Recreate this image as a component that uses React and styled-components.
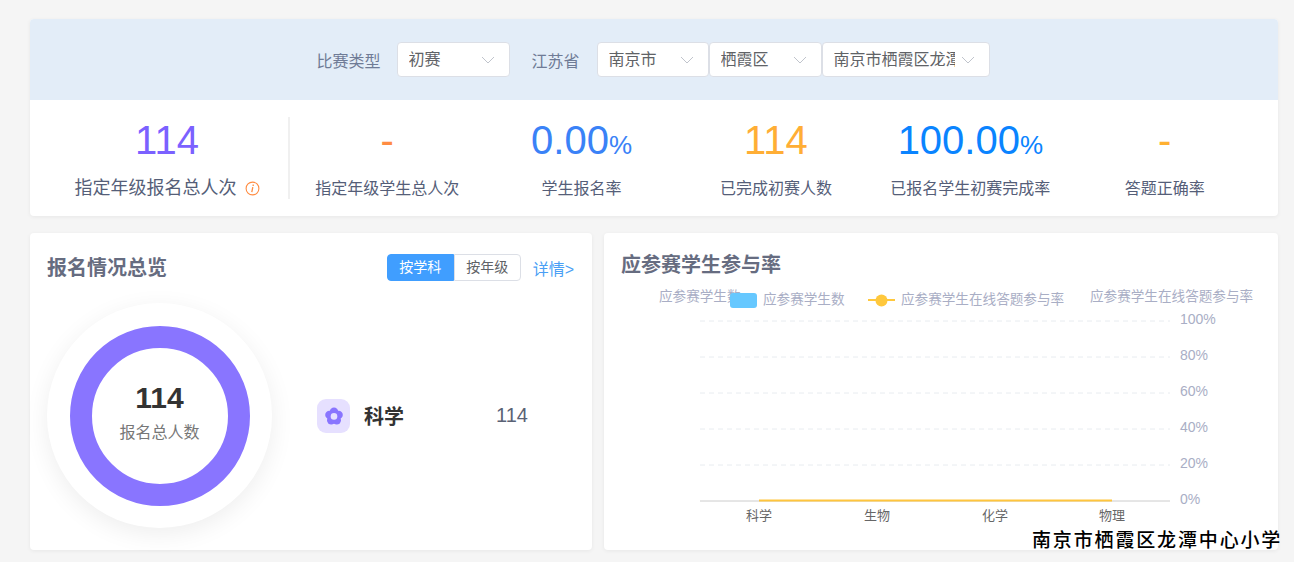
import styled, { createGlobalStyle } from 'styled-components';

const stats = [
  { value: '-', color: '#ff8c42', label: '指定年级学生总人次' },
  { value: '0.00', unit: '%', color: '#3a82f7', label: '学生报名率' },
  { value: '114', color: '#ffae35', label: '已完成初赛人数' },
  { value: '100.00', unit: '%', color: '#0a84ff', label: '已报名学生初赛完成率' },
  { value: '-', color: '#ffb031', label: '答题正确率' },
];

const ticks = [
  { y: 321, label: '100%' },
  { y: 357, label: '80%' },
  { y: 393, label: '60%' },
  { y: 429, label: '40%' },
  { y: 465, label: '20%' },
];

const subjects = [
  { x: 759, label: '科学' },
  { x: 877, label: '生物' },
  { x: 995, label: '化学' },
  { x: 1112, label: '物理' },
];

function Chevron() {
  return (
    <Arrow viewBox="0 0 14 8">
      <polyline points="1,1 7,7 13,1" fill="none" stroke="#c0c4cc" strokeWidth="1" />
    </Arrow>
  );
}

function Flower() {
  return (
    <svg width="20" height="20" viewBox="0 0 20 20">
      <g fill="#8975ff">
        <circle cx="10" cy="5.6" r="4.2" />
        <circle cx="14.6" cy="8.9" r="4.2" />
        <circle cx="12.8" cy="14.3" r="4.2" />
        <circle cx="7.2" cy="14.3" r="4.2" />
        <circle cx="5.4" cy="8.9" r="4.2" />
      </g>
      <circle cx="10" cy="10.4" r="3.3" fill="#e6e0ff" />
    </svg>
  );
}

function InfoMark() {
  return (
    <InfoIcon viewBox="0 0 15 15">
      <circle cx="7.5" cy="7.5" r="6.4" fill="none" stroke="#ff8c42" strokeWidth="1.1" />
      <path d="M8.2 3.6v1.3M7.8 6.2l-1 5" fill="none" stroke="#ff8c42" strokeWidth="1.3" />
    </InfoIcon>
  );
}

function RateChart() {
  return (
    <ChartSvg viewBox="621 283 657 267">
      <g fontSize="13.6" fill="#a9aec5">
        <text x="659" y="301">应参赛学生数</text>
        <text x="763" y="304">应参赛学生数</text>
        <text x="901" y="304">应参赛学生在线答题参与率</text>
        <text x="1090" y="301">应参赛学生在线答题参与率</text>
      </g>
      <rect x="730" y="293" width="27" height="15" rx="3" fill="#66c8ff" />
      <line x1="868" x2="895" y1="300" y2="300" stroke="#ffc83d" strokeWidth="2" />
      <circle cx="881.5" cy="300.5" r="6" fill="#ffc83d" />
      {ticks.map((t) => (
        <g key={t.y}>
          <line x1="700" x2="1170" y1={t.y} y2={t.y} stroke="#e8ecf0" strokeDasharray="5 4" />
          <text x="1180" y={t.y + 3} fontSize="14" fill="#a9aec5">{t.label}</text>
        </g>
      ))}
      <line x1="700" x2="1170" y1="501" y2="501" stroke="#cccccc" />
      <text x="1180" y="504" fontSize="14" fill="#a9aec5">0%</text>
      <line x1="759" x2="1112" y1="500.5" y2="500.5" stroke="#ffc53d" strokeWidth="2" />
      {subjects.map((s) => (
        <text key={s.x} x={s.x} y="520" fontSize="13" fill="#666666" textAnchor="middle">{s.label}</text>
      ))}
    </ChartSvg>
  );
}

export default function App() {
  return (
    <Page>
      <GlobalStyle />
      <Overview>
        <Filters>
          <FilterLabel>比赛类型</FilterLabel>
          <Select $width={113}>
            <SelectText>初赛</SelectText>
            <Chevron />
          </Select>
          <FilterLabel $left={22} $right={17}>江苏省</FilterLabel>
          <Select $width={112}>
            <SelectText>南京市</SelectText>
            <Chevron />
          </Select>
          <Select $width={113}>
            <SelectText>栖霞区</SelectText>
            <Chevron />
          </Select>
          <Select $width={168}>
            <SelectText>南京市栖霞区龙潭中心小学</SelectText>
            <Chevron />
          </Select>
        </Filters>
        <Stats>
          <LeadStat>
            <Value $color="#7b61ff">114</Value>
            <LeadLabel>
              指定年级报名总人次
              <InfoMark />
            </LeadLabel>
          </LeadStat>
          {stats.map((s) => (
            <Stat key={s.label}>
              <Value $color={s.color}>
                {s.value}
                {s.unit && <Unit>{s.unit}</Unit>}
              </Value>
              <StatLabel>{s.label}</StatLabel>
            </Stat>
          ))}
        </Stats>
      </Overview>

      <Panels>
        <SummaryCard>
          <CardHead>
            <CardTitle>报名情况总览</CardTitle>
            <Toggle>
              <ToggleItem $active>按学科</ToggleItem>
              <ToggleItem>按年级</ToggleItem>
            </Toggle>
            <DetailLink>详情&gt;</DetailLink>
          </CardHead>
          <SummaryBody>
            <Halo>
              <Ring>
                <RingValue>114</RingValue>
                <RingLabel>报名总人数</RingLabel>
              </Ring>
            </Halo>
            <SubjectRow>
              <SubjectIcon>
                <Flower />
              </SubjectIcon>
              <SubjectName>科学</SubjectName>
              <SubjectCount>114</SubjectCount>
            </SubjectRow>
          </SummaryBody>
        </SummaryCard>

        <ChartCard>
          <CardTitle>应参赛学生参与率</CardTitle>
          <RateChart />
        </ChartCard>
      </Panels>

      <Watermark>南京市栖霞区龙潭中心小学</Watermark>
    </Page>
  );
}

const GlobalStyle = createGlobalStyle`
  html, body {
    margin: 0;
    padding: 0;
    background: #f5f5f5;
    overflow: hidden;
  }
  * {
    box-sizing: border-box;
  }
`;

const Page = styled.div`
  position: relative;
  width: 1294px;
  height: 562px;
  padding: 19px 16px 0 30px;
  font-family: "Liberation Sans", "Noto Sans CJK SC", sans-serif;
`;

const Overview = styled.section`
  background: #fff;
  border-radius: 4px;
  box-shadow: 0 1px 4px rgba(0, 0, 0, 0.06);
  overflow: hidden;
`;

const Filters = styled.div`
  height: 81px;
  padding-right: 2px;
  background: #e3edf8;
  display: flex;
  align-items: center;
  justify-content: center;
`;

const FilterLabel = styled.span`
  font-size: 16px;
  color: #6f7b96;
  margin-left: ${(props) => props.$left || 0}px;
  margin-right: ${(props) => props.$right || 16}px;
`;

const Select = styled.div`
  width: ${(props) => props.$width}px;
  height: 35px;
  padding: 0 14px 0 11px;
  display: flex;
  align-items: center;
  justify-content: space-between;
  background: #fff;
  border: 1px solid #dcdfe6;
  border-radius: 4px;
`;

const SelectText = styled.span`
  flex: 1;
  min-width: 0;
  margin-right: 6px;
  font-size: 16px;
  line-height: 24px;
  color: #606266;
  white-space: nowrap;
  overflow: hidden;
`;

const Arrow = styled.svg`
  width: 14px;
  height: 8px;
  flex: none;
`;

const Stats = styled.div`
  height: 116px;
  padding: 0 16px;
  display: flex;
  align-items: center;
`;

const Stat = styled.div`
  width: 194.4px;
  height: 82px;
  padding-top: 3px;
  display: flex;
  flex-direction: column;
  align-items: center;
`;

const LeadStat = styled(Stat)`
  width: 244px;
  border-right: 2px solid #f0f0f0;
`;

const Value = styled.div`
  height: 40px;
  font-size: 40px;
  line-height: 40px;
  color: ${(props) => props.$color};
`;

const Unit = styled.span`
  font-size: 26px;
`;

const StatLabel = styled.div`
  margin-top: 17px;
  font-size: 16px;
  line-height: 24px;
  color: #555e78;
  white-space: nowrap;
`;

const LeadLabel = styled(StatLabel)`
  display: flex;
  align-items: center;
  font-size: 18px;
  margin-top: 16px;
`;

const InfoIcon = styled.svg`
  width: 15px;
  height: 15px;
  margin-left: 8px;
`;

const Panels = styled.div`
  margin-top: 17px;
  display: flex;
  gap: 12px;
`;

const Card = styled.section`
  height: 317px;
  background: #fff;
  border-radius: 4px;
  box-shadow: 0 1px 4px rgba(0, 0, 0, 0.06);
`;

const SummaryCard = styled(Card)`
  width: 562px;
  padding: 21px 18px 0 17px;
`;

const ChartCard = styled(Card)`
  width: 674px;
  padding: 17px 0 0 17px;
`;

const CardHead = styled.div`
  height: 27px;
  display: flex;
  align-items: center;
`;

const CardTitle = styled.h2`
  margin: 0 auto 0 0;
  padding-top: 2px;
  font-size: 20px;
  line-height: 27px;
  font-weight: 700;
  color: #666c80;
`;

const Toggle = styled.div`
  display: flex;
  height: 27px;
`;

const ToggleItem = styled.span`
  width: 67px;
  font-size: 14px;
  line-height: 25px;
  text-align: center;
  color: ${(props) => (props.$active ? '#fff' : '#606266')};
  background: ${(props) => (props.$active ? '#409eff' : '#fff')};
  border: 1px solid ${(props) => (props.$active ? '#409eff' : '#dcdfe6')};
  border-radius: ${(props) => (props.$active ? '4px 0 0 4px' : '0 4px 4px 0')};
`;

const DetailLink = styled.a`
  margin-left: 12px;
  font-size: 16px;
  color: #4a9ff5;
`;

const SummaryBody = styled.div`
  margin-top: 22px;
  display: flex;
  align-items: center;
`;

const Halo = styled.div`
  width: 225px;
  height: 225px;
  border-radius: 50%;
  background: #fff;
  box-shadow: 0 6px 24px rgba(0, 0, 0, 0.07);
  display: flex;
  align-items: center;
  justify-content: center;
`;

const Ring = styled.div`
  width: 180px;
  height: 180px;
  padding-bottom: 6px;
  border: 22.5px solid #8975ff;
  border-radius: 50%;
  display: flex;
  flex-direction: column;
  align-items: center;
  justify-content: center;
`;

const RingValue = styled.div`
  font-size: 30px;
  line-height: 36px;
  font-weight: 700;
  color: #333;
`;

const RingLabel = styled.div`
  margin-top: 5px;
  font-size: 16px;
  line-height: 24px;
  color: #777;
`;

const SubjectRow = styled.div`
  margin-left: 45px;
  display: flex;
  align-items: center;
`;

const SubjectIcon = styled.div`
  width: 33px;
  height: 34px;
  border-radius: 9px;
  background: #e6e0ff;
  display: flex;
  align-items: center;
  justify-content: center;
`;

const SubjectName = styled.div`
  width: 132px;
  margin-left: 14px;
  font-size: 20px;
  font-weight: 700;
  color: #333;
`;

const SubjectCount = styled.div`
  font-size: 20px;
  color: #5a6275;
`;

const ChartSvg = styled.svg`
  display: block;
  width: 657px;
  height: 267px;
  margin-top: 4px;
  overflow: visible;
`;

const Watermark = styled.div`
  position: absolute;
  left: 1032px;
  top: 528px;
  font-size: 19px;
  line-height: 26px;
  font-weight: 500;
  letter-spacing: 1.85px;
  color: #000;
  white-space: nowrap;
`;
